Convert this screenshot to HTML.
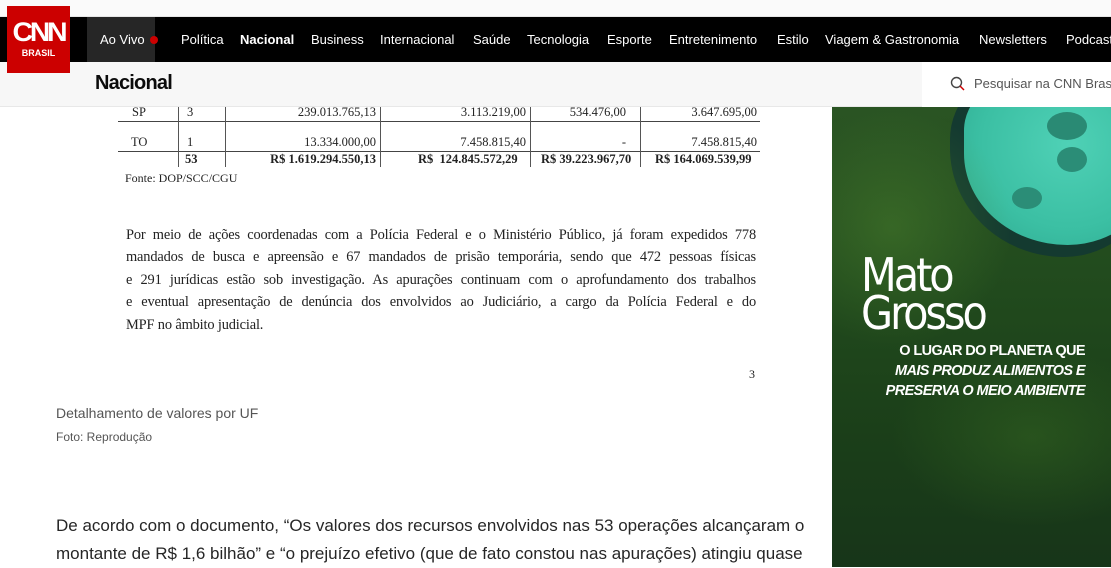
<!DOCTYPE html>
<html><head><meta charset="utf-8"><style>
*{margin:0;padding:0;box-sizing:border-box}
body{width:1111px;height:567px;overflow:hidden;background:#fff;position:relative;font-family:"Liberation Sans",Arial,sans-serif;color:#262626}
.a{position:absolute;white-space:nowrap}
#top{left:0;top:0;width:1111px;height:17px;background:#fafafa;border-bottom:1px solid #e6e6e6}
#nav{left:0;top:17px;width:1111px;height:45px;background:#000}
#sub{left:0;top:62px;width:1111px;height:45px;background:#f7f7f7;border-bottom:1px solid #e8e8e8}
#logo{left:7px;top:6px;width:63px;height:67px;background:#cc0000;color:#fff;text-align:center}
.n{top:17px;height:45px;line-height:45px;color:#fff;font-size:13px}
.serif{font-family:"Liberation Serif","Times New Roman",serif;color:#222}
.t{font-size:12.5px}
.vl{position:absolute;width:1px;background:#555}
.c{font-family:"Liberation Sans Narrow","Liberation Sans",sans-serif}
.pl{text-align:justify;text-align-last:justify;height:22.4px;overflow:hidden}
</style></head><body>
<div class="a" id="top"></div>
<div class="a" id="nav"></div>
<div class="a" id="sub"></div>
<div class="a" id="logo">
<div style="font:bold 27px/1 'Liberation Sans',sans-serif;letter-spacing:-3px;margin-top:13px;transform:scaleX(1.05)">CNN</div>
<div style="font:bold 9px/1 'Liberation Sans',sans-serif;margin-top:3px">BRASIL</div>
</div>
<div class="a" style="left:87px;top:17px;width:68px;height:45px;background:#262626"></div>
<div class="a n" style="left:100px">Ao Vivo <span style="display:inline-block;width:8px;height:8px;border-radius:50%;background:#cc0000;margin-left:2px"></span></div>
<div class="a n" style="left:181px">Política</div>
<div class="a n" style="left:240px;font-weight:bold">Nacional</div>
<div class="a n" style="left:311px">Business</div>
<div class="a n" style="left:380px">Internacional</div>
<div class="a n" style="left:473px">Saúde</div>
<div class="a n" style="left:527px">Tecnologia</div>
<div class="a n" style="left:607px">Esporte</div>
<div class="a n" style="left:669px">Entretenimento</div>
<div class="a n" style="left:777px">Estilo</div>
<div class="a n" style="left:825px">Viagem &amp; Gastronomia</div>
<div class="a n" style="left:979px">Newsletters</div>
<div class="a n" style="left:1066px">Podcasts</div>
<div class="a" style="left:95px;top:72px;font-size:20px;font-weight:bold;color:#0c0c0c;letter-spacing:-0.8px">Nacional</div>
<div class="a" style="left:922px;top:62px;width:189px;height:45px;background:#fff"></div>
<svg class="a" style="left:950px;top:76px" width="16" height="16" viewBox="0 0 16 16"><circle cx="6.5" cy="6.5" r="5" fill="none" stroke="#444" stroke-width="1.4"/><path d="M10 10l4 4" stroke="#cc0000" stroke-width="1.5"/></svg>
<div class="a" style="left:974px;top:76px;font-size:13px;color:#555">Pesquisar na CNN Brasil</div>

<div class="a" style="left:118px;top:121px;width:642px;height:1px;background:#444"></div>
<div class="a" style="left:118px;top:151px;width:642px;height:1px;background:#444"></div>
<div class="vl" style="left:178px;top:107px;height:60px"></div>
<div class="vl" style="left:225px;top:107px;height:60px"></div>
<div class="vl" style="left:380px;top:107px;height:60px"></div>
<div class="vl" style="left:530px;top:107px;height:60px"></div>
<div class="vl" style="left:640px;top:107px;height:60px"></div>
<div class="a serif t" style="left:132px;top:105px">SP</div>
<div class="a serif t" style="left:187px;top:105px">3</div>
<div class="a serif t" style="right:735px;top:105px">239.013.765,13</div>
<div class="a serif t" style="right:585px;top:105px">3.113.219,00</div>
<div class="a serif t" style="right:485px;top:105px">534.476,00</div>
<div class="a serif t" style="right:354px;top:105px">3.647.695,00</div>
<div class="a serif t" style="left:131px;top:135px">TO</div>
<div class="a serif t" style="left:187px;top:135px">1</div>
<div class="a serif t" style="right:735px;top:135px">13.334.000,00</div>
<div class="a serif t" style="right:585px;top:135px">7.458.815,40</div>
<div class="a serif t" style="right:485px;top:135px">-</div>
<div class="a serif t" style="right:354px;top:135px">7.458.815,40</div>
<div class="a serif t" style="left:185px;top:152px;font-weight:bold">53</div>
<div class="a serif t" style="right:735px;top:152px;font-weight:bold">R$ 1.619.294.550,13</div>
<div class="a serif t" style="left:418px;top:152px;font-weight:bold">R$ &nbsp;124.845.572,29</div>
<div class="a serif t" style="left:541px;top:152px;font-weight:bold">R$ 39.223.967,70</div>
<div class="a serif t" style="left:655px;top:152px;font-weight:bold">R$ 164.069.539,99</div>
<div class="a serif" style="left:125px;top:171px;font-size:12px">Fonte: DOP/SCC/CGU</div>

<div class="a serif" style="left:126px;top:224px;width:630px;font-size:14.4px;line-height:22.4px;white-space:nowrap;letter-spacing:-0.15px">
<div class="pl">Por meio de ações coordenadas com a Polícia Federal e o Ministério Público, já foram expedidos 778</div>
<div class="pl">mandados de busca e apreensão e 67 mandados de prisão temporária, sendo que 472 pessoas físicas</div>
<div class="pl">e 291 jurídicas estão sob investigação. As apurações continuam com o aprofundamento dos trabalhos</div>
<div class="pl">e eventual apresentação de denúncia dos envolvidos ao Judiciário, a cargo da Polícia Federal e do</div>
<div>MPF no âmbito judicial.</div>
</div>
<div class="a serif" style="left:749px;top:367px;font-size:12px">3</div>

<div class="a c" style="left:56px;top:405px;font-size:14px;color:#555">Detalhamento de valores por UF</div>
<div class="a c" style="left:56px;top:430px;font-size:12px;color:#555">Foto: Reprodução</div>
<div class="a c" style="left:56px;top:512px;font-size:17px;color:#262626;line-height:28px">De acordo com o documento, “Os valores dos recursos envolvidos nas 53 operações alcançaram o<br>montante de R$ 1,6 bilhão” e “o prejuízo efetivo (que de fato constou nas apurações) atingiu quase</div>

<div class="a" style="left:832px;top:107px;width:279px;height:460px;overflow:hidden;background:linear-gradient(180deg,#2a5423,#214a1d 40%,#1b3f19 70%,#173519)">
<div style="position:absolute;left:118px;top:-40px;width:200px;height:190px;border-radius:40% 30% 45% 60%;background:#143a30"></div>
<div style="position:absolute;left:132px;top:-30px;width:190px;height:168px;border-radius:35% 25% 50% 60%;background:radial-gradient(ellipse at 55% 40%,#4fd1b6,#3bbfa3 60%,#2ea88f)"></div>
<div style="position:absolute;left:215px;top:5px;width:40px;height:28px;border-radius:50%;background:#2a8a74"></div>
<div style="position:absolute;left:225px;top:40px;width:30px;height:25px;border-radius:50%;background:#2b8d77"></div>
<div style="position:absolute;left:180px;top:80px;width:30px;height:22px;border-radius:50%;background:#2b8d77"></div>
<div style="position:absolute;left:0;top:0;width:279px;height:460px;background:radial-gradient(ellipse 120px 120px at 60px 120px,rgba(90,150,50,.35),rgba(0,0,0,0)),radial-gradient(ellipse 140px 90px at 200px 330px,rgba(70,130,40,.3),rgba(0,0,0,0))"></div>
</div>
<div class="a" style="left:861px;top:256px;font-size:46px;line-height:38px;color:#fff;letter-spacing:-3px;font-family:'DejaVu Sans Condensed','DejaVu Sans',sans-serif">Mato<br>Grosso</div>
<div class="a" style="right:26px;top:341px;font-size:14.5px;line-height:20px;color:#fff;font-weight:bold;text-align:right;letter-spacing:-0.6px">O LUGAR DO PLANETA QUE<br><i>MAIS PRODUZ ALIMENTOS E<br>PRESERVA O MEIO AMBIENTE</i></div>
</body></html>
